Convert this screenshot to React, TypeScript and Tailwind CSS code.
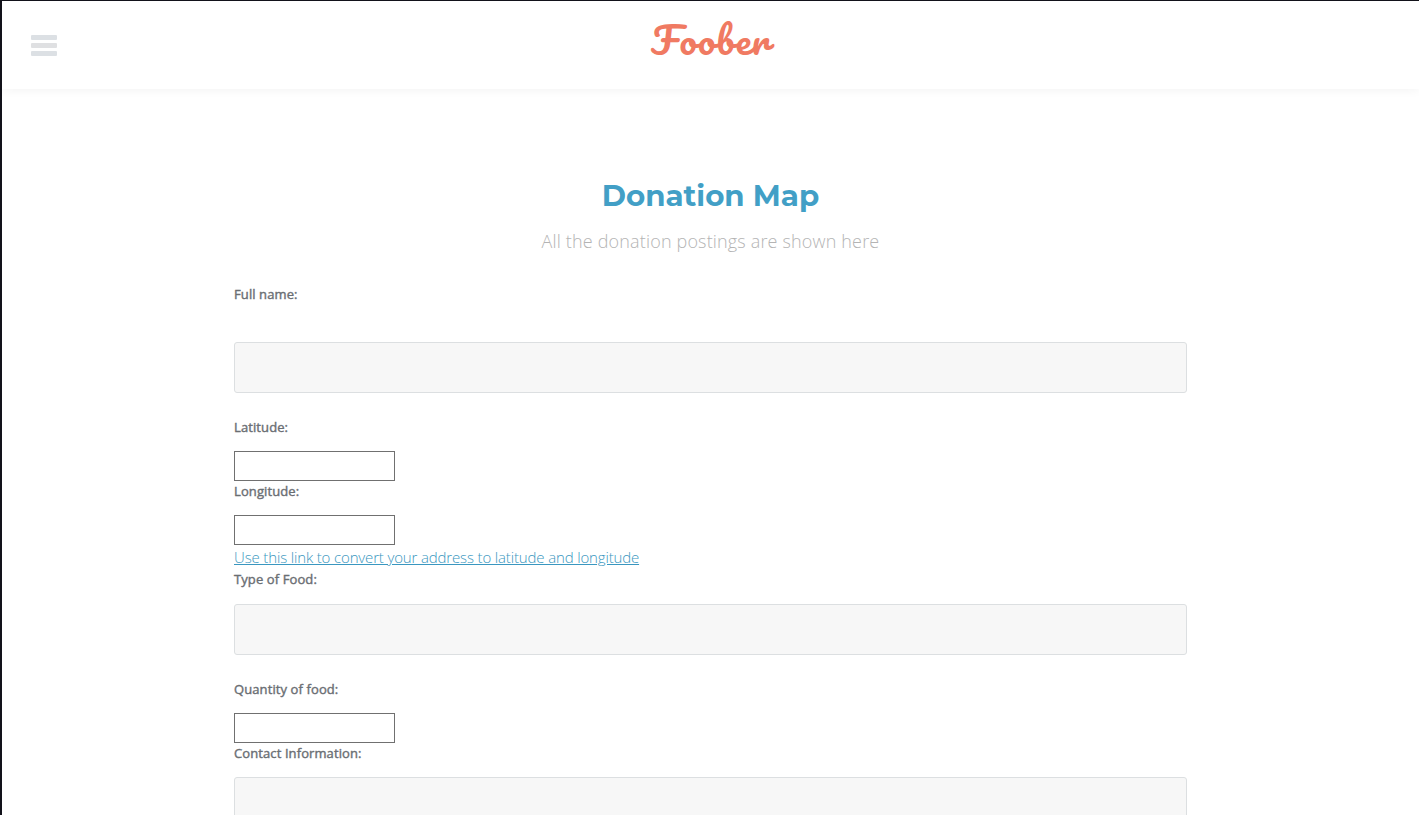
import clsx from "clsx"

function Label({ children, className }: { children: string; className?: string }) {
  return (
    <p className={clsx("h-5 text-[13px] leading-5 font-normal tracking-[0.1px] text-[#6a6e73] [-webkit-text-stroke:0.4px_#6a6e73]", className)}>
      {children}
    </p>
  )
}

function WideInput() {
  return (
    <input type="text" className="block h-[51px] w-full rounded-[3px] border border-[#dcdfe1] bg-[#f7f7f7] px-4 mb-6 outline-none" />
  )
}

function SmallInput() {
  return <input type="text" className="block h-[30px] w-[161px] border border-[#707070] bg-white px-1 outline-none" />
}

export default function App() {
  return (
    <div className="h-[815px] overflow-hidden border-l-2 border-t border-[#12121a] bg-white font-['Open_Sans',sans-serif]">

      <header className="relative flex h-[88px] justify-center bg-white shadow-[0_1px_10px_rgba(0,0,0,0.05)]">
        <button className="absolute left-[29px] top-[34px] flex flex-col gap-[3px]">
          <span className="h-[5px] w-[26px] rounded-[1px] bg-[#dce0e4]" />
          <span className="h-[5px] w-[26px] rounded-[1px] bg-[#dfe0e2]" />
          <span className="h-[5px] w-[26px] rounded-[1px] bg-[#dce0e4]" />
        </button>
        <p className="mt-[3px] h-[72px] px-2 scale-x-107 text-[36px] leading-[72px] tracking-[1px] text-[#f07a62] font-[Pacifico,cursive]">Foober</p>
      </header>

      <main className="ml-[232px] w-[953px]">
        <h1 className="mt-[87px] h-10 text-center text-[29.3px] leading-10 font-bold text-[#429fc6] font-[Montserrat,sans-serif]">
          Donation Map
        </h1>
        <p className="mt-[13px] h-6 text-center text-[18px] leading-6 font-light tracking-[0.16px] text-[#b4b4b4]">
          All the donation postings are shown here
        </p>

        <form className="mt-[31px]">
          <Label className="mb-[38px]">Full name:</Label>
          <WideInput />
          <Label className="mb-[14px]">Latitude:</Label>
          <SmallInput />
          <Label className="mb-[14px]">Longitude:</Label>
          <SmallInput />
          <a href="#" className="block h-6 text-[15px] leading-6 font-light tracking-[-0.15px] text-[#3a97c0] underline">
            Use this link to convert your address to latitude and longitude
          </a>
          <Label className="mb-[15px]">Type of Food:</Label>
          <WideInput />
          <Label className="mb-[14px]">Quantity of food:</Label>
          <SmallInput />
          <Label className="mb-[14px]">Contact Information:</Label>
          <WideInput />
        </form>
      </main>

    </div>
  )
}
